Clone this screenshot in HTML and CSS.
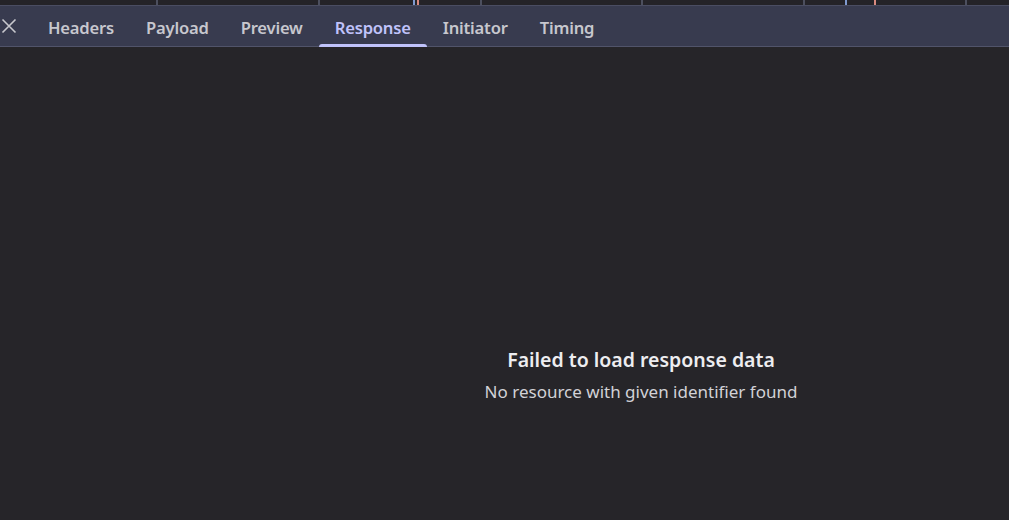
FILE: index.html
```html
<!DOCTYPE html>
<html>
<head>
<meta charset="utf-8">
<link rel="stylesheet" href="styles.css">
</head>
<body>
<div class="timeline">
  <span class="tick" style="left:156px"></span>
  <span class="tick" style="left:318px"></span>
  <span class="tick blue" style="left:413px"></span>
  <span class="tick red" style="left:417px"></span>
  <span class="tick" style="left:480px"></span>
  <span class="tick" style="left:641px"></span>
  <span class="tick" style="left:803px"></span>
  <span class="tick blue" style="left:845px"></span>
  <span class="tick red" style="left:874px"></span>
  <span class="tick" style="left:965px"></span>
</div>
<div class="toolbar">
  <button class="close" aria-label="Close">
    <svg width="16" height="16" viewBox="0 0 16 16"><path d="M1.5 1.5 L14.5 14.5 M14.5 1.5 L1.5 14.5" stroke="#c8c8ce" stroke-width="1.6" fill="none"/></svg>
  </button>
  <div class="tab">Headers</div>
  <div class="tab">Payload</div>
  <div class="tab">Preview</div>
  <div class="tab active">Response</div>
  <div class="tab">Initiator</div>
  <div class="tab">Timing</div>
</div>
<div class="content">
  <div class="message">
    <div class="title">Failed to load response data</div>
    <div class="sub">No resource with given identifier found</div>
  </div>
</div>
</body>
</html>
```
FILE: styles.css
```css
html, body {
  margin: 0;
  padding: 0;
  background: #262529;
  height: 100%;
  overflow: hidden;
  font-family: "Noto Sans", "Open Sans", sans-serif;
}
.timeline {
  position: relative;
  height: 5px;
  background: #242328;
  border-bottom: 1px solid #4a4d62;
}
.tick {
  position: absolute;
  top: 0;
  width: 2px;
  height: 5px;
  background: #4c4f5e;
}
.tick.blue { background: #7f9ad0; }
.tick.red { background: #d98a80; }
.toolbar {
  display: flex;
  align-items: stretch;
  height: 40px;
  background: #383b4f;
  border-bottom: 1px solid #51546a;
}
.close {
  width: 32px;
  padding: 0 0 0 1px;
  border: 0;
  background: transparent;
  display: flex;
  align-items: center;
  justify-content: flex-start;
}
.tab {
  padding: 2px 16px 0;
  display: flex;
  align-items: center;
  font-size: 16.6px;
  font-weight: 600;
  color: #c7c7ce;
  position: relative;
  letter-spacing: -0.2px;
}
.tab.active {
  color: #c0c3fb;
}
.tab.active::after {
  content: "";
  position: absolute;
  left: 0;
  right: 0;
  bottom: -1px;
  height: 3px;
  border-radius: 3px 3px 0 0;
  background: #c0c3fb;
}
.content {
  height: calc(100% - 47px);
  display: flex;
  justify-content: center;
  padding-left: 273px;
}
.message {
  margin-top: 299px;
  text-align: center;
  color: #e6e6ea;
}
.title {
  font-size: 19.5px;
  font-weight: 600;
  line-height: 28px;
  color: #ededf0;
}
.sub {
  font-size: 17px;
  line-height: 28px;
  margin-top: 4px;
  color: #d2d2d7;
}
```
